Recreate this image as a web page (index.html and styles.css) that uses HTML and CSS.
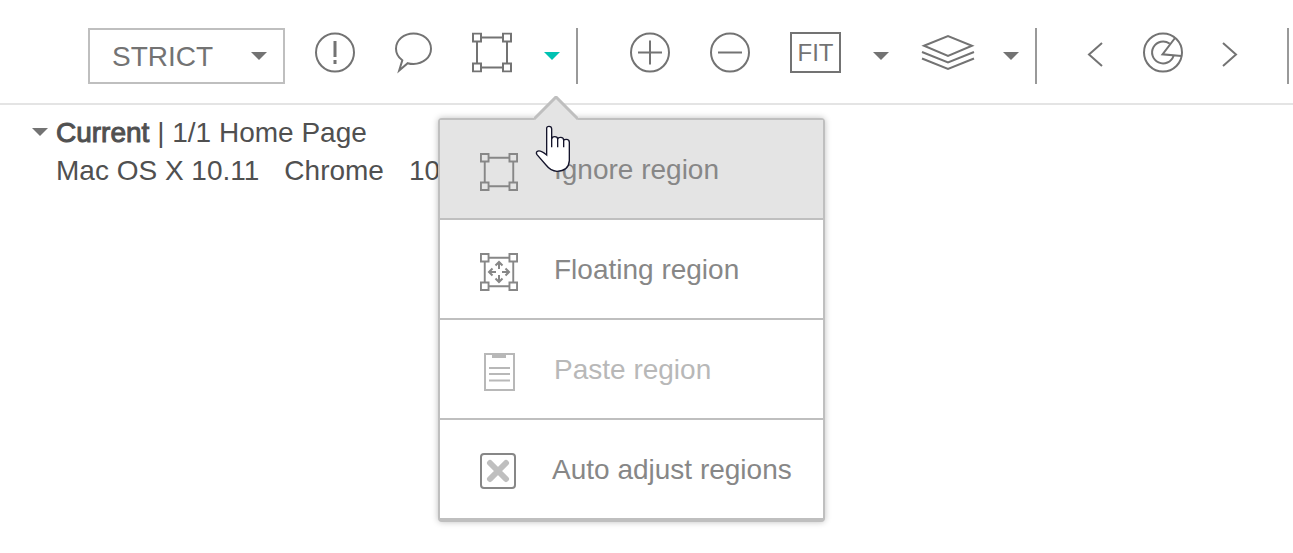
FILE: index.html
```
<!DOCTYPE html>
<html lang="en">
  <head>
    <meta charset="UTF-8" />
    <meta name="viewport" content="width=device-width, initial-scale=1.0" />
    <title>Home Page</title>
    <link rel="stylesheet" href="styles.css">
  </head>
  <body>
    <svg class="symbols" aria-hidden="true">
      <symbol id="region" viewBox="0 0 40 40">
        <path d="M9 5h22M9 35h22M5 9v22M35 9v22M1 1h8v8H1zM31 1h8v8h-8zM1 31h8v8H1zM31 31h8v8h-8z" />
      </symbol>
      <symbol id="caret" viewBox="0 0 16 8">
        <path d="M0 0h16L8 8z" />
      </symbol>
    </svg>

    <header class="toolbar">
      <div class="level">
        <select class="level-select" aria-label="Match level">
          <option>STRICT</option>
        </select>
        <svg class="caret level-caret"><use href="#caret" /></svg>
      </div>

      <div class="group first">
        <button class="tool" aria-label="Issue">
          <svg class="icon" width="40" height="48">
            <circle cx="20" cy="20.5" r="19" />
            <path class="thick" d="M20 9v16M20 28v4" />
          </svg>
        </button>
        <button class="tool" aria-label="Comment">
          <svg class="icon" width="37" height="48">
            <path d="M7.3 28.3C3 25 1 21 1 16.7C1 8 9 1.5 18.5 1.5S36 8 36 16.7S28 32 18.5 32Q15.5 32 12.7 31.2L4.2 38.5z" />
          </svg>
        </button>
        <div class="split">
          <button class="tool" aria-label="Region">
            <svg class="icon" width="40" height="48"><use href="#region" y="0.5" width="40" height="40" /></svg>
          </button>
          <button class="tool active" aria-label="Region options">
            <svg class="caret"><use href="#caret" /></svg>
          </button>

          <div class="menu">
            <svg class="menu-arrow" width="44" height="24">
              <path class="arrow-fill" d="M0 24L22 2L44 24z" />
              <path class="arrow-line" d="M0 23L22 1L44 23" />
            </svg>
            <button class="menu-item hover">
              <svg class="icon" width="38" height="42"><use href="#region" y="4" width="38" height="38" /></svg>
              Ignore region
            </button>
            <button class="menu-item">
              <svg class="icon" width="38" height="42">
                <use href="#region" y="4" width="38" height="38" />
                <path d="M19 20v-7M15.5 16.5L19 13l3.5 3.5M19 26v7M15.5 29.5L19 33l3.5-3.5M16 23H9M12.5 19.5L9 23l3.5 3.5M22 23h7M25.5 19.5L29 23l-3.5 3.5" />
              </svg>
              Floating region
            </button>
            <button class="menu-item" disabled>
              <svg class="icon" width="38" height="42">
                <path d="M5 5h29v36H5zM9 19h21M9 25h21M9 31.5h21" />
                <path class="clip" d="M12 5h14v4H12z" />
              </svg>
              Paste region
            </button>
            <label class="menu-item toggle">
              <input class="check" type="checkbox" />
              Auto adjust regions
            </label>
            <svg class="pointer" viewBox="315 105 108 141">
              <path d="M350 115Q350 109 357 109Q365 109 365 117V147Q366 140 374 140Q383 140 383 147Q384 142 392 142Q401 142 401 151Q402 148 409 148Q418 148 418 157V212Q416 243 381 244Q362 243 348 225L321 194Q317 188 322 184Q330 179 350 195z" />
              <path d="M365 145v27M383 146v26M401 150v22" />
            </svg>
          </div>
        </div>
      </div>

      <div class="group">
        <button class="tool" aria-label="Zoom in">
          <svg class="icon" width="40" height="48">
            <circle cx="20" cy="20.5" r="19" />
            <path d="M8 20.5h24M20 8.5v24" />
          </svg>
        </button>
        <button class="tool" aria-label="Zoom out">
          <svg class="icon" width="40" height="48">
            <circle cx="20" cy="20.5" r="19" />
            <path d="M8 20.5h24" />
          </svg>
        </button>
        <div class="split">
          <button class="tool fit">FIT</button>
          <button class="tool" aria-label="Fit options">
            <svg class="caret"><use href="#caret" /></svg>
          </button>
          <button class="tool" aria-label="Layers">
            <svg class="icon" width="50" height="48">
              <path d="M3 13.7L27 4L51 13.7L27 24zM1 20L27 30.5L53 20M1 26.5L27 37L53 26.5" />
            </svg>
          </button>
          <button class="tool" aria-label="Layer options">
            <svg class="caret"><use href="#caret" /></svg>
          </button>
        </div>
      </div>

      <div class="group last">
        <button class="tool" aria-label="Previous">
          <svg class="icon" width="15" height="48"><path d="M14 11L1 22.5L14 34" /></svg>
        </button>
        <button class="tool" aria-label="Highlight differences">
          <svg class="icon" width="40" height="48">
            <circle cx="20" cy="20.5" r="19" />
            <path d="M26.5 11.5A11 11 0 1 0 30.5 24M32 6L19.5 22.3L38.5 24" />
          </svg>
        </button>
        <button class="tool" aria-label="Next">
          <svg class="icon" width="13" height="48"><path d="M0 11L13 22.5L0 34" /></svg>
        </button>
      </div>
    </header>

    <main class="info">
      <svg class="caret info-caret"><use href="#caret" /></svg>
      <div>
        <div class="info-row"><span class="current">Current</span> | <span class="step">1/1 Home Page</span></div>
        <div class="info-row env"><span>Mac OS X 10.11</span><span>Chrome</span><span>10</span></div>
      </div>
    </main>
  </body>
</html>
```

FILE: styles.css
```
* {
  box-sizing: border-box;
}
body {
  margin: 0;
  min-height: 100vh;
  background-color: white;
  color: #505050;
  font-family: "Liberation Sans", Arial, sans-serif;
  font-size: 28px;
}
button,
select {
  font: inherit;
  color: inherit;
}
svg {
  display: block;
  flex: none;
}
.symbols {
  position: absolute;
  width: 0;
  height: 0;
}
.icon {
  fill: none;
  stroke: currentColor;
  stroke-width: 2;
  overflow: visible;
}
.thick {
  stroke-width: 3;
}
.caret {
  width: 16px;
  height: 8px;
  fill: currentColor;
}

/* toolbar */
.toolbar {
  display: flex;
  padding: 28px 0 19px 88px;
  border-bottom: 2px solid #e4e4e4;
  color: #737373;
}
.level {
  position: relative;
  flex: none;
}
.level-select {
  appearance: none;
  width: 197px;
  height: 56px;
  padding: 0 22px;
  border: 2px solid #bfbfbf;
  border-radius: 0;
  background-color: white;
}
.level-caret {
  position: absolute;
  right: 18px;
  top: 24px;
  pointer-events: none;
}
.group {
  display: flex;
  flex: none;
  align-items: center;
  gap: 40px;
  height: 56px;
  padding: 0 16px 0 52px;
  border-right: 2px solid #999;
}
.group.first {
  padding-left: 30px;
}
.group.last {
  padding: 0 51px;
}
.split {
  position: relative;
  display: flex;
  align-items: center;
  gap: 32px;
  height: 56px;
}
.tool {
  padding: 0;
  border: 0;
  background: none;
  cursor: pointer;
}
.tool.active {
  color: #00c2b2;
}
.tool.fit {
  width: 51px;
  height: 41px;
  margin-bottom: 7px;
  border: 2px solid #737373;
  font-size: 24px;
  line-height: 36px;
}

/* region menu */
.menu {
  position: absolute;
  left: -34px;
  top: 90px;
  z-index: 1;
  width: max-content;
  border: 2px solid #bfbfbf;
  border-bottom-width: 4px;
  border-radius: 4px;
  background-color: white;
  box-shadow: 0 0 6px rgba(0, 0, 0, 0.25);
  color: #878787;
}
.menu-item {
  display: flex;
  align-items: center;
  gap: 36px;
  width: 100%;
  height: 100px;
  padding: 2px 31px 0 40px;
  border: 0;
  border-bottom: 2px solid #bfbfbf;
  background: none;
  text-align: left;
  cursor: pointer;
}
.menu-item.toggle {
  height: 98px;
  border-bottom: 0;
}
.menu-item.hover {
  background-color: #e4e4e4;
}
.menu-item:disabled {
  color: #b8b8b8;
}
.clip {
  fill: currentColor;
  stroke: none;
}
.check {
  appearance: none;
  flex: none;
  width: 36px;
  height: 36px;
  margin: 2px 0 0;
  border: 2px solid #878787;
  border-radius: 4px;
  background: url("data:image/svg+xml,%3Csvg xmlns='http://www.w3.org/2000/svg' viewBox='0 0 32 32'%3E%3Cpath d='M8 8l16 16M24 8L8 24' stroke='%23bfbfbf' stroke-width='6' stroke-linecap='round'/%3E%3C/svg%3E");
}
.menu-arrow {
  position: absolute;
  left: 94px;
  top: -24px;
}
.arrow-fill {
  fill: #e4e4e4;
}
.arrow-line {
  fill: none;
  stroke: #bfbfbf;
  stroke-width: 3;
}
.pointer {
  position: absolute;
  left: 95px;
  top: 5px;
  width: 36px;
  height: 47px;
  fill: white;
  stroke: #14142b;
  stroke-width: 4;
  pointer-events: none;
}

/* image info */
.info {
  display: flex;
  gap: 8px;
  padding: 9px 32px;
  line-height: 38px;
}
.info-caret {
  margin-top: 14px;
  color: #737373;
}
.info-row {
  white-space: nowrap;
}
.current {
  -webkit-text-stroke: 1px currentColor;
}
.env {
  display: flex;
  gap: 25px;
}
```
